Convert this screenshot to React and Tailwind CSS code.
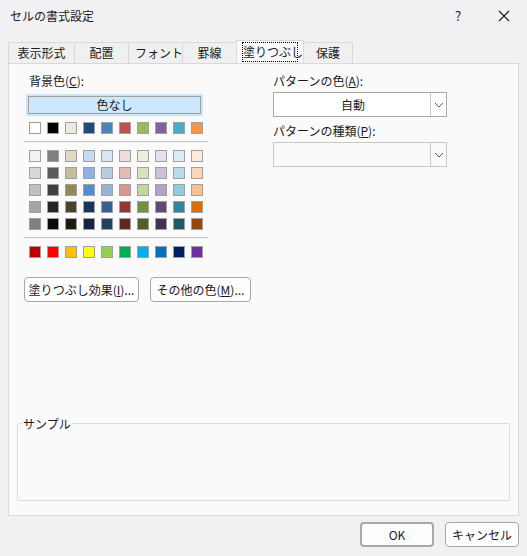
const theme=["#FFFFFF","#000000","#EEECE1","#1F497D","#4F81BD","#C0504D","#9BBB59","#8064A2","#4BACC6","#F79646"];
const tints=[
["#F2F2F2","#7F7F7F","#DDD9C3","#C6D9F0","#DBE5F1","#F2DCDB","#EBF1DD","#E5E0EC","#DBEEF3","#FDEADA"],
["#D8D8D8","#595959","#C4BD97","#8DB3E2","#B8CCE4","#E5B9B7","#D7E3BC","#CCC1D9","#B7DDE8","#FBD5B5"],
["#BFBFBF","#3F3F3F","#938953","#548DD4","#95B3D7","#D99694","#C3D69B","#B2A2C7","#92CDDC","#FAC08F"],
["#A5A5A5","#262626","#494429","#17365D","#366092","#953734","#76923C","#5F497A","#31859B","#E36C09"],
["#7F7F7F","#0C0C0C","#1D1B10","#0F243E","#244061","#632423","#4F6128","#3F3151","#205867","#974806"]];
const std=["#C00000","#FF0000","#FFC000","#FFFF00","#92D050","#00B050","#00B0F0","#0070C0","#002060","#7030A0"];
const Row=({c})=>(<div className="flex gap-[6px]">{c.map((x,i)=><div key={i} className="w-[12px] h-[12px] border border-[#a0a0a0]" style={{background:x}}/>)}</div>);
const Chev=()=>(<svg width="10" height="6" viewBox="0 0 10 6"><path d="M1 1l4 4 4-4" fill="none" stroke="#555" strokeWidth="1"/></svg>);
const Btn=({children,w,cls=""})=>(<div className={`h-[25px] shrink-0 whitespace-nowrap border border-[#a8a8a8] rounded-[4px] bg-[#fdfdfd] flex items-center justify-center ${cls}`} style={{width:w}}>{children}</div>);
export default function App(){
const tabs=["表示形式","配置","フォント","罫線","塗りつぶし","保護"];
return(<div className="w-[527px] h-[556px] bg-[#f3f0f3] text-[12px] text-[#1a1a1a] flex flex-col" style={{fontFamily:'"Noto Sans CJK JP",sans-serif'}}>
<div className="h-[32px] flex items-center pl-[10px] shrink-0">
<span className="flex-1 text-[12px]">セルの書式設定</span>
<span className="w-[46px] text-center text-[13px]">?</span>
<span className="w-[46px] flex justify-center"><svg width="12" height="12" viewBox="0 0 12 12"><path d="M1 1l10 10M11 1L1 11" stroke="#222" strokeWidth="1.2"/></svg></span>
</div>
<div className="px-[8px] flex flex-col flex-1">
<div className="flex h-[22px] mt-[9px] items-end">
{tabs.map((t,i)=><div key={t} className={`shrink-0 whitespace-nowrap px-[6px] flex items-center border border-b-0 border-[#d9d9d9] ${i===4?"bg-[#fafafa] h-[23px] border-[#c8c8c8]":"bg-[#f0f0f0] h-[21px]"} ${i===0?"":"-ml-px"}`} style={{width:[67,55,55,55,68,50][i]}}><span className={`w-full text-center ${i===4?"outline outline-1 outline-dotted outline-black":""}`}>{t}</span></div>)}
</div>
<div className="h-[453px] bg-[#fafafa] border border-[#d9d9d9] flex flex-col px-[8px]">
<div className="flex">
<div className="w-[198px] shrink-0 flex flex-col pl-[12px] pt-[8px]">
<div>背景色(<u>C</u>):</div>
<div className="-ml-[3px] mt-[4px] w-[177px] h-[22px] border-2 border-[#cce4f7] flex"><div className="flex-1 bg-[#cce8ff] border border-[#a0a0a0] flex items-center justify-center">色なし</div></div>
<div className="mt-[6px]"><Row c={theme}/></div>
<div className="h-px bg-[#c0c0c0] w-[184px] -ml-[5px] mt-[7px] mb-[8px]"/>
<div className="flex flex-col gap-[5px]">{tints.map((r,i)=><Row key={i} c={r}/>)}</div>
<div className="h-px bg-[#c0c0c0] w-[184px] -ml-[5px] mt-[7px] mb-[8px]"/>
<div><Row c={std}/></div>
<div className="flex gap-[11px] mt-[19px] -ml-[5px]"><Btn w={115}>塗りつぶし効果(<u>I</u>)...</Btn><Btn w={101}>その他の色(<u>M</u>)...</Btn></div>
</div>
<div className="ml-[58px] pt-[8px] flex flex-col">
<div>パターンの色(<u>A</u>):</div>
<div className="mt-[2px] w-[174px] h-[25px] border border-[#a8a8a8] bg-white flex"><div className="flex-1 flex items-center justify-center pl-[2px]">自動</div><div className="w-[16px] border-l border-[#c8c8c8] flex items-center justify-center"><Chev/></div></div>
<div className="mt-[5px]">パターンの種類(<u>P</u>):</div>
<div className="mt-[2px] w-[174px] h-[25px] border border-[#c8c8c8] bg-[#fafafa] flex"><div className="flex-1"/><div className="w-[16px] border-l border-[#c8c8c8] flex items-center justify-center"><Chev/></div></div>
</div>
</div>
<div className="mt-auto mb-[14px] relative h-[78px] border border-[#dcdcdc] rounded-[2px]">
<span className="absolute -top-[9px] left-[4px] bg-[#fafafa] px-[1px]">サンプル</span>
</div>
</div>
<div className="flex justify-end gap-[11px] mt-[6px]">
<Btn w={74} cls="border-[#005fb8] border-2">OK</Btn><Btn w={74}>キャンセル</Btn>
</div>
</div>
</div>);}
